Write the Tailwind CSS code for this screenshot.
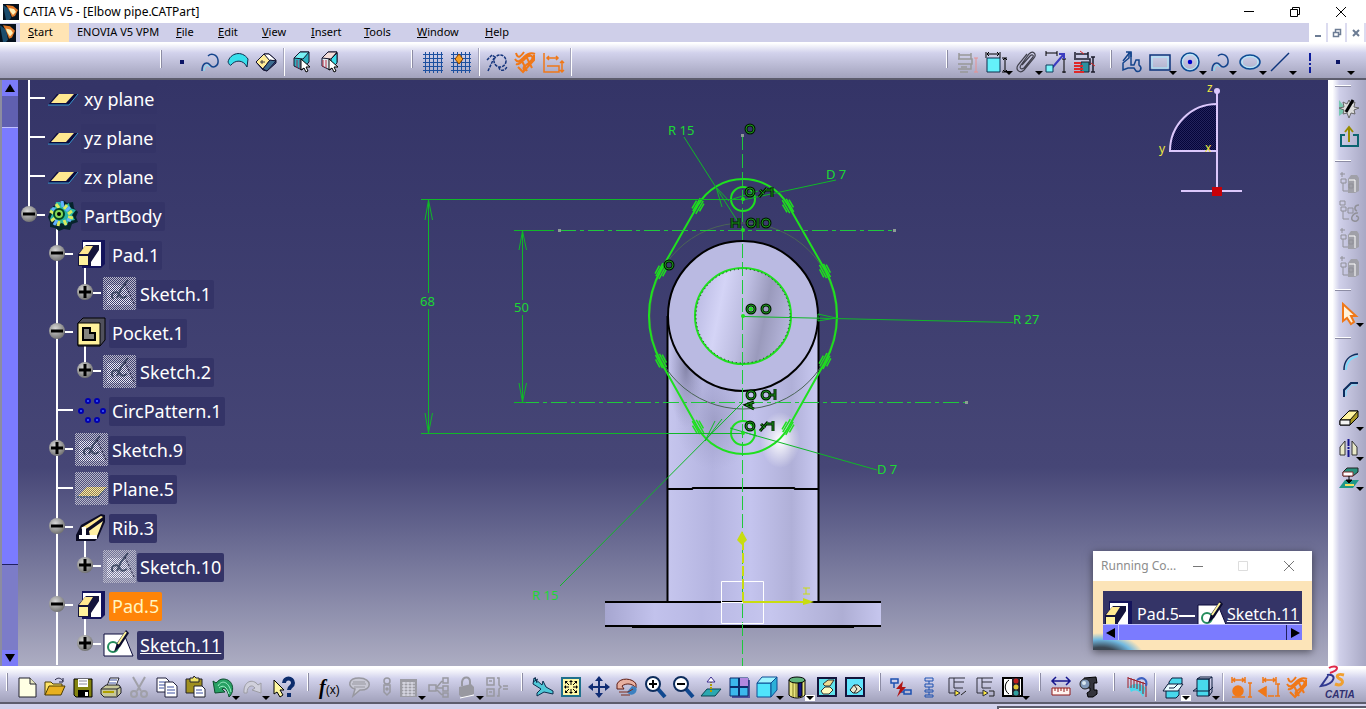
<!DOCTYPE html>
<html lang="en">
<head>
<meta charset="utf-8">
<title>CATIA V5 - [Elbow pipe.CATPart]</title>
<script src="https://cdn.jsdelivr.net/npm/@tailwindcss/browser@4"></script>
</head>
<body class="flex h-screen flex-col overflow-hidden bg-[#d2d2ec] font-['Noto_Sans','Open_Sans',sans-serif] text-black">

<svg class="absolute size-0" aria-hidden="true">
<defs>
  <pattern id="dither" width="2" height="2" patternUnits="userSpaceOnUse"><path d="M0 0h1v1H0zM1 1h1v1H1z" fill="#b9b9c9"/></pattern>
  <pattern id="ditherW" width="2" height="2" patternUnits="userSpaceOnUse"><path d="M0 0h1v1H0zM1 1h1v1H1z" fill="#ececf4"/></pattern>
  <pattern id="ditherY" width="2" height="2" patternUnits="userSpaceOnUse"><path d="M0 0h1v1H0zM1 1h1v1H1z" fill="#fff0a0"/></pattern>
  <pattern id="ditherD" width="2" height="2" patternUnits="userSpaceOnUse"><rect width="2" height="2" fill="#23235c"/><path d="M0 0h1v1H0zM1 1h1v1H1z" fill="#05053a"/></pattern>
  <radialGradient id="ball" cx=".4" cy=".35" r=".7"><stop offset="0" stop-color="#d8d8d8"/><stop offset="1" stop-color="#6c6c6c"/></radialGradient>
  <linearGradient id="pipe"><stop offset="0" stop-color="#c6c6ee"/><stop offset=".3" stop-color="#b4b4e0"/><stop offset=".55" stop-color="#c4c4ee"/><stop offset=".82" stop-color="#b0b0d8"/><stop offset="1" stop-color="#cacaf2"/></linearGradient>
  <linearGradient id="flange"><stop offset="0" stop-color="#a6a6d0"/><stop offset=".18" stop-color="#c2c2ec"/><stop offset=".35" stop-color="#b8b8e4"/><stop offset=".6" stop-color="#c6c6ee"/><stop offset=".86" stop-color="#aeaed4"/><stop offset="1" stop-color="#c6c6ee"/></linearGradient>
  <linearGradient id="bore" x1="0" y1=".4" x2="1" y2=".6"><stop offset="0" stop-color="#bcbce4"/><stop offset=".25" stop-color="#d4d4f6"/><stop offset=".5" stop-color="#bcbce0"/><stop offset=".72" stop-color="#9a9abc"/><stop offset="1" stop-color="#b8b8de"/></linearGradient>
  <radialGradient id="shade"><stop offset="0" stop-color="#77779a"/><stop offset="1" stop-color="#8a8ab0" stop-opacity="0"/></radialGradient>
  <radialGradient id="glow"><stop offset="0" stop-color="#ffffff"/><stop offset="1" stop-color="#ffffff" stop-opacity="0"/></radialGradient>

  <path id="arr" d="M21 21h8l-4 4z" fill="#000"/>

  <!-- application icon -->
  <g id="app"><path d="M0 0h16v16H0z" fill="#06101c"/><path d="M0 1l6 4 2 9-2 2H3z" fill="#1c4c6c"/><path d="M3 1l7 1 5 4-3 6-3 1-3-7z" fill="#e07828"/><path d="M6 4l5 1 2 3-3 3-3-4z" fill="#fff0b8"/></g>

  <!-- tree guides -->
  <g id="gv"><path d="M11 0v39" stroke="#fff" stroke-width="2"/></g>
  <g id="gt"><path d="M11 0v39M11 18h16" stroke="#fff" stroke-width="2"/></g>
  <g id="gm"><path d="M19 18h8" stroke="#fff" stroke-width="2"/><circle cx="11" cy="17" r="8" fill="url(#ball)"/><path d="M5 17h12" stroke="#000" stroke-width="3"/></g>
  <g id="gp"><path d="M19 18h8" stroke="#fff" stroke-width="2"/><circle cx="11" cy="17" r="8" fill="url(#ball)"/><path d="M5 17h12M11 11v12" stroke="#000" stroke-width="3"/></g>

  <!-- tree icons, 32 x 39 -->
  <g id="t-plane"><path d="M2 25l9-11h21l-9 11z" fill="#0b0b3c"/><path d="M2 25h21l9-11" fill="none" stroke="#3a9ad0"/><path d="M5 23l8-9h15l-8 9z" fill="#ffe890"/></g>
  <g id="t-body"><path d="M17 3l4 3 6-1 1 6 4 4-2 5 2 5-6 2-2 6-6-1-5 2-4-3-5-1v-5l-2-5 2-5 3-6 6-1z" fill="#06242c"/><path d="M14 5l4 4 5-3 1 5 6 2-4 5 3 5-6 1-3 5-4-3-5 2-2-5-5-1 2-5-2-5 5-2 1-5z" fill="#28b4a8"/><path d="M10 7l3 4M21 8l-3 4M4 14l5 3M26 14l-4 3M5 24l4-3M12 29l1-5M20 28l-2-5M27 21l-5-1" stroke="#d8ec60" stroke-width="3"/><path d="M6 11l4 3M24 10l-4 4M8 28l3-5M25 24l-4-2M16 4l1 6" stroke="#60b0ff" stroke-width="3"/><circle cx="13" cy="17" r="5" fill="#86d858" stroke="#042" stroke-width="2"/><circle cx="13" cy="17" r="2"/></g>
  <g id="t-pad"><path d="M8 4h23v24l-4 4H8z" fill="#14145c"/><path d="M9 6h18v24H9z" fill="#fff"/><path d="M4 18l8-9h13v5l-8 12v4H4z" fill="#14143c"/><path d="M5 18l6-8h8l-5 8z" fill="#ffe890"/><path d="M5 20h9v9H5z" fill="#fff29c"/></g>
  <g id="t-pocket"><path d="M4 9l5-5h22v22l-5 6H4z" fill="#50505c" stroke="#000"/><path d="M4 9h22v22H4z" fill="#fff29c" stroke="#000"/><path d="M9 14h7v5h5v7H9z" fill="#85857e" stroke="#000" stroke-width="2"/></g>
  <g id="t-sketch"><path d="M2 8h20l9 22H2z" fill="#fff" stroke="#0b0b3c"/><circle cx="11" cy="21" r="5" fill="none" stroke="#248c5c" stroke-width="2"/><path d="M12 26l3-9L24 4l3 3-9 14z" fill="#0b0b2c"/><path d="M16 18l8-12" stroke="#fff49c" stroke-width="2"/></g>
  <g id="t-hid"><path d="M1 2h33v33H1z" fill="url(#dither)"/><path d="M5 10h17l9 20H5z" fill="url(#ditherW)"/><path d="M11 24c-4-6 4-9 6-5s3 5 8 2M15 23l4-9 7-9" fill="none" stroke="#23304c" stroke-width="2" opacity=".75"/><path d="M23 9l9 20" stroke="#20203c" stroke-dasharray="2 2"/></g>
  <g id="t-hplane"><path d="M1 2h33v33H1z" fill="url(#dither)"/><path d="M4 26l9-9h20l-9 9z" fill="#8c7c5c"/><path d="M4 26l9-9h20l-9 9z" fill="url(#ditherY)"/><path d="M3 27h21l8-9" fill="none" stroke="#1c4460" stroke-dasharray="2 1"/></g>
  <g id="t-circ" fill="#4468ff" stroke="#0000b0" stroke-width="2"><circle cx="14" cy="9" r="2"/><circle cx="23" cy="9" r="2"/><circle cx="7" cy="19" r="2"/><circle cx="29" cy="19" r="2"/><circle cx="14" cy="28" r="2"/><circle cx="23" cy="28" r="2"/></g>
  <g id="t-rib"><path d="M2 32v-6l5-10L27 5l4 1v7l-7 16-3 3z" fill="#0b0b24"/><path d="M7 19L27 7l2 1-14 10-5 3z" fill="#ffe890"/><path d="M15 22l14-10-6 15h-7z" fill="#fff0a4"/><path d="M5 26h18v4H5zM8 18h4v12H8z" fill="#fff"/></g>

  <!-- sketcher icons -->
  <g id="i-dot"><path d="M10 10h4v4h-4z" fill="#0b1464"/></g>
  <g id="i-spline" fill="none" stroke="#14448c" stroke-width="1.500"><path d="M4 21c0-8 5-10 8-6s9 1 8-5-7-7-10-4"/><path d="M6 21c1-7 4-7 6-4" stroke="#7ce8ff" stroke-width="1"/></g>
  <g id="i-surf"><path d="M2 12C4 3 16 0 22 9l-1 8C17 9 9 10 5 15c-1 1-2-1-3-3z" fill="#38e0ec" stroke="#0c2c4c"/></g>
  <g id="i-solid" stroke="#141430"><path d="M2 12l8-8h5l7 6v3l-9 8-4-1z" fill="#3c50a0"/><path d="M2 12l8-8 6 6-7 9z" fill="#ffee98"/><path d="M10 4h5l7 6-6 1z" fill="#fff"/><path d="M9 19l7-9 6 1-9 10z" fill="#3c6c90"/><path d="M6 12h5M8 10v4" stroke-width=".8"/></g>
  <g id="i-cubeA" stroke="#14142c"><path d="M4 8l6-6h9v10l-7 8-8-4z" fill="#2cb0c0"/><path d="M4 8l6-6h9l-6 7z" fill="#78f0f4"/><path d="M7 10v8M10 10v9" stroke="#a02c50"/></g>
  <g id="i-cubeB" stroke="#14142c"><path d="M4 8l6-6h9v10l-7 8-8-4z" fill="#dce8ee"/><path d="M4 8l6-6h9l-6 7z" fill="#f4dcd8"/><path d="M13 9l6-6v10l-6 6z" fill="#3ce0ec"/><path d="M5 10v7M8 10v8" stroke="#c03048"/></g>
  <g id="i-cur"><path d="M11 9v11l3-2 2 4 2-1-2-4h4z" fill="#fff" stroke="#000"/></g>
  <g id="i-grid" stroke="#1c50a0" stroke-width="1" shape-rendering="crispEdges"><path d="M2 4h20M2 8h20M2 12h20M2 16h20M2 20h20M4 2v21M8 2v21M12 2v21M16 2v21M20 2v21"/></g>
  <g id="i-cons" fill="none" stroke="#14347c" stroke-width="1.500"><g stroke-dasharray="3 1"><circle cx="15" cy="11" r="6"/><path d="M2 10l5-5 3 2M3 21l6-13M14 17c0 5 7 4 8-1"/></g></g>
  <g id="i-geo" fill="none" stroke="#f07818" stroke-width="2"><path d="M3 3c2 7 5 3 8-1M2 9c3 5 6 1 9-2s7-5 11-3M3 14c4 2 9-7 13-8s5 2 1 6-8 4-6 8M14 8l5 10M8 9l6 12M5 17l5 5 11-12v-5"/></g>
  <g id="i-dim" fill="none" stroke="#f07818" stroke-width="1.500"><path d="M3 3v19h15v-6H6M6 8h11M8 6L6 8l2 2M15 6l2 2-2 2M21 11v11M19 13l2-2 2 2M19 20l2 2 2-2"/></g>
  <g id="i-c1" fill="none" stroke="#989898"><path d="M3 5h12M3 3v6M15 3v6M2 9h14v5H5M2 14h13v5H2M5 17h6M4 22h8" stroke-width="1.500"/><path d="M20 8v14M18 8h4M18 22h4" stroke="#e89090"/></g>
  <g id="i-c2"><path d="M3 8h13v14H3z" fill="#64f0fa" stroke="#0c2c4c"/><path d="M2 8V2M16 8V2M3 4h12M21 8v14M18 8h5M18 22h5M5 2L3 4l2 2M13 2l2 2-2 2M19 10l2-2 2 2M19 20l2 2 2-2" fill="none" stroke="#000"/></g>
  <g id="i-clip" fill="none" stroke="#40404c" stroke-width="1.200"><path d="M8 15l8-9c2-2 4-1 3 1l-9 11c-3 2-5 0-3-3L15 4c4-4 8 0 5 4L10 20c-4 4-9 0-6-5l9-11"/></g>
  <g id="i-c3" fill="none" stroke="#000"><path d="M2 3h11M2 1v5M13 1v5M20 9v14M18 9h4M18 22h4"/><path d="M8 18L20 4M15 4h5v5" stroke="#3c3cc0" stroke-width="2"/><path d="M2 15h7v7H2z" fill="#7cf4fa" stroke="#0c3c5c"/></g>
  <g id="i-c4" fill="none" stroke="#1c1c2c"><path d="M4 4h12M3 2v6M16 2v6M2 9h16v6M21 7v15M19 7h4M19 22h4" stroke-width="1.500"/><path d="M9 12h8v10H9z" fill="#2c90a0"/><path d="M2 13h7M2 16h9M2 19h9M2 22h10" stroke="#e02828" stroke-width="2"/><path d="M8 1l4 3M19 13l4 3" stroke="#e02828"/></g>
  <g id="i-prof" fill="none" stroke="#14448c" stroke-width="1.500"><path d="M3 20v-7l6-5V3h2v12h3l2-5h3v5c4 3 1 8-3 6l-2-3H8z"/><path d="M3 11l7-9M6 2h5v5"/></g>
  <g id="i-rect" fill="none" stroke="#0c347c" stroke-width="1.500"><path d="M2 5h20v15H2z"/><path d="M4 7h16v11H4z" stroke="#a8ecff" stroke-width="1"/></g>
  <g id="i-circ" fill="none" stroke="#0c4c94" stroke-width="1.500"><circle cx="12" cy="12" r="9"/><circle cx="12" cy="12" r="7.500" stroke="#b0f0ff" stroke-width="1"/><circle cx="12" cy="12" r="1.500" fill="#0000d0" stroke="#0000d0"/></g>
  <g id="i-ell" fill="none" stroke="#0c4c94" stroke-width="1.500"><ellipse cx="12" cy="12" rx="10" ry="7"/><ellipse cx="12" cy="12" rx="8" ry="5.500" stroke="#b0f0ff" stroke-width="1"/></g>
  <g id="i-line"><path d="M3 21L21 3" stroke="#0c347c" stroke-width="1.500"/></g>
  <g id="i-axis"><path d="M12 3v8M12 13v2M12 17v6" stroke="#0c1c9c" stroke-width="2"/></g>

  <!-- standard icons -->
  <g id="i-new"><path d="M4 3h11l6 6v13H4z" fill="#ffffe4" stroke="#20202c"/><path d="M15 3v6h6" fill="#e8e8c0" stroke="#20202c"/></g>
  <g id="i-open" stroke="#4c3c00"><path d="M2 20V7h6l2 2h9v3" fill="#ffe468"/><path d="M2 20l4-9h16l-4 9z" fill="#e8b020"/><path d="M12 5c3-3 6-2 8 1M20 3v4h-4" fill="none" stroke="#20203c"/></g>
  <g id="i-save"><path d="M3 4h18v18H5l-2-2z" fill="#848410" stroke="#000"/><path d="M7 4h10v8H7z" fill="#fff"/><path d="M8 6h8M8 9h8" stroke="#889"/><path d="M7 15h11v7H7z" fill="#000"/><path d="M14 17h3v4h-3z" fill="#fff"/></g>
  <g id="i-print" stroke="#20202c"><path d="M8 11l3-8h9l-3 8z" fill="#fff"/><path d="M11 5h7M10 8h7" stroke="#3c50a0"/><path d="M2 14l5-4h13l2 3v5l-4 4H5l-3-3z" fill="#c8c898"/><path d="M2 14h16v7M18 14l4-2" fill="none"/><path d="M4 17h11" stroke="#b0a000" stroke-width="2"/></g>
  <g id="i-cut" fill="none" stroke="#a0a0a8" stroke-width="2"><path d="M6 2l8 14M18 2l-8 14"/><circle cx="7" cy="19" r="3"/><circle cx="17" cy="19" r="3"/></g>
  <g id="i-copy" fill="#fff" stroke="#20203c"><path d="M2 3h9l3 3v11H2z"/><path d="M4 7h6M4 10h6M4 13h5" stroke="#3c50a0"/><path d="M10 7h8l4 4v11H10z"/><path d="M12 12h7M12 15h8M12 18h8" stroke="#3c50a0"/></g>
  <g id="i-paste" stroke="#20202c"><path d="M3 4h16v14H3z" fill="#a09020"/><path d="M7 3h3l1-2 2 2h3v4H7z" fill="#f0e468"/><path d="M11 11h8l3 3v8H11z" fill="#fff"/><path d="M13 15h6M13 18h7" stroke="#3c50a0"/></g>
  <g id="i-undo"><path d="M2 6l2 12 10-1-3-3c3-2 6 2 7 8 6-5 5-18-6-18-3 0-5 2-7 4z" fill="#28a064" stroke="#0c4c2c"/><path d="M7 11c4-7 11-4 13 6M8 13c4-4 8-1 10 6" fill="none" stroke="#a0f0c8"/></g>
  <g id="i-redo"><path d="M3 18C2 6 12 3 17 10l3-2v10l-9-3 3-2c-3-4-8-2-8 5z" fill="#d0d0dc" stroke="#9c9ca4"/></g>
  <g id="i-help"><path d="M3 5v14l3-2 3 5 3-2-3-5h4z" fill="#fff8a0" stroke="#000"/><path d="M13 8c0-6 9-6 9 0 0 4-4 3-4 7" fill="none" stroke="#0c2c6c" stroke-width="4"/><path d="M16 18h4v4h-4z" fill="#0c2c6c"/></g>
  <g id="i-bub"><path d="M12 3c14 0 13 13 1 12l-7 6 2-7C0 12 1 3 12 3z" fill="#c8c8d4" stroke="#9898a0" stroke-width="1.500"/><path d="M6 7h12M5 9h14M7 12h11" stroke="#9898a0"/></g>
  <g id="i-key" fill="none" stroke="#9898a0" stroke-width="1.500"><circle cx="12" cy="6" r="3"/><path d="M9 10h6v7l-3 3-3-3z"/><circle cx="12" cy="14" r="1"/></g>
  <g id="i-tab"><path d="M3 4h17v18H3z" fill="#9c9ca4"/><path d="M5 8h13M5 11h13M5 14h13M5 17h13M5 20h13M7 7v14M11 7v14M15 7v14" stroke="#e4e4f0"/></g>
  <g id="i-net" fill="none" stroke="#9898a0" stroke-width="1.500"><path d="M2 10h7v6H2zM16 3h5v5h-5zM16 11h5v5h-5zM16 18h5v4h-5zM9 13h7M10 12l5-6M10 15l5 5"/></g>
  <g id="i-lock"><path d="M4 12l12-3 3 3v7L8 23l-4-3z" fill="#9898a0"/><path d="M7 11V7c1-6 8-6 8 0v3" fill="none" stroke="#9898a0" stroke-width="2"/><path d="M5 23l14-3" stroke="#fff"/></g>
  <g id="i-eq" fill="none" stroke="#9898a0" stroke-width="1.500"><path d="M2 3h7v7H2zM2 14h7v7H2zM4 6h3M4 17h3M12 3h2v7l2 2-2 2v7h-2M18 11h5M18 14h5"/></g>

  <!-- view icons -->
  <g id="i-fly"><path d="M3 3l8 7 1-4 3 6 7 4v3l-9-2-7 4v-3l4-4-8-5z" fill="#50c8d8" stroke="#0c2c4c"/><path d="M4 2l2 6M2 7l5-3" stroke="#0c2c4c"/></g>
  <g id="i-fit"><path d="M3 3h18v18H3z" fill="#fff8a8" stroke="#20708c" stroke-width="2"/><path d="M12 5l2 2h-4zM12 19l2-2h-4zM5 12l2-2v4zM19 12l-2-2v4zM6 6h3L6 9zM18 6h-3l3 3zM6 18h3l-3-3zM18 18h-3l3-3z" fill="#000"/><path d="M12 6v4M12 14v4M6 12h4M14 12h4M7 7l3 3M17 7l-3 3M7 17l3-3M17 17l-3-3" stroke="#000"/></g>
  <g id="i-pan" fill="#102c74"><path d="M12 1l4 5h-3v5h5V8l5 4-5 4v-3h-5v5h3l-4 5-4-5h3v-5H6v3l-5-4 5-4v3h5V6H8z"/></g>
  <g id="i-rot"><path d="M2 9C5 2 18 3 21 9v4c-4-5-10-5-14-2l2 3H2z" fill="#e8b0a0" stroke="#5c1c14"/><path d="M12 17a5 5 0 1 0 9-5l-4-1z" fill="#3c80c0"/><path d="M4 17h9l5-3M6 20h9" fill="none" stroke="#7c2c1c"/></g>
  <g id="i-zin"><path d="M15 14l7 8" stroke="#104890" stroke-width="4"/><circle cx="10" cy="9" r="7" fill="#fff" stroke="#0c2c5c" stroke-width="2"/><path d="M6 9h8M10 5v8" stroke="#000" stroke-width="2"/></g>
  <g id="i-zout"><path d="M15 14l7 8" stroke="#104890" stroke-width="4"/><circle cx="10" cy="9" r="7" fill="#fff" stroke="#0c2c5c" stroke-width="2"/><path d="M6 9h8" stroke="#000" stroke-width="2"/></g>
  <g id="i-norm"><path d="M2 21l6-7h14l-6 7z" fill="#2ca8b0" stroke="#0c4450"/><path d="M12 17V7" stroke="#b0a000" stroke-width="2" stroke-dasharray="2 1"/><path d="M8 7h8l-4-5z" fill="#fff" stroke="#3c2c90"/></g>
  <g id="i-multi"><path d="M5 5h18v18H5z" fill="#50509c"/><path d="M3 3h18v18H3z" fill="#3cb8ec" stroke="#0c2c6c"/><path d="M12 3h9v9h-9z" fill="#b088e0"/><path d="M12 3v18M3 12h18" stroke="#0c2c6c" stroke-width="2"/></g>
  <g id="i-iso" stroke="#0c4c94"><path d="M2 8h14v14H2z" fill="#50e4fc"/><path d="M2 8l5-6h15l-6 6z" fill="#a0f4ff"/><path d="M16 8l6-6v13l-6 7z" fill="#2cb0d8"/></g>
  <g id="i-cyl" stroke="#000"><path d="M4 5v15c3 4 13 4 16 0V5z" fill="#e8e480"/><path d="M8 8v14M11 8v14" stroke="#807c20"/><path d="M13 7v15l4-1V7z" fill="#141480"/><ellipse cx="12" cy="5" rx="8" ry="3" fill="#60b47c"/></g>
  <g id="i-hs"><path d="M3 3h18v18H3z" fill="#60e4ec" stroke="#14143c" stroke-width="2"/><path d="M8 9l5-4h6l-4 6h-5z" fill="#f0dc90" stroke="#333"/><path d="M6 16l4-4h5l3 3-4 4H8z" fill="#fffcc0" stroke="#333"/></g>
  <g id="i-sw"><path d="M3 3h18v18H3z" fill="#60e4fc" stroke="#14143c" stroke-width="2"/><path d="M7 15l4-5h4l4 4-5 4h-4z" fill="#e8e8d0" stroke="#222"/><path d="M11 10l3 4-3 4" fill="none" stroke="#222"/></g>

  <!-- analysis icons -->
  <g id="i-upd" fill="none" stroke="#1c50b0" stroke-width="1.500"><path d="M2 4h7v4H2zM15 15h7v4h-7zM5 8v5M12 17h3"/><path d="M14 6l-7 8h4l-3 8 9-10h-4z" fill="#b01414" stroke="none"/></g>
  <g id="i-stk" fill="none" stroke="#1c50b0"><path d="M8 3h8v3H8zM8 9h8v3H8zM8 15h8v2H8zM8 20h8v2H8zM12 6v3M12 12v3M12 17v3"/></g>
  <g id="i-ins" fill="none" stroke="#30303c"><path d="M9 3H4v15h6M9 3h11M9 7h10M9 3v10h9"/><path d="M10 15l5 3-5 3z" fill="#ffec40"/></g>
  <g id="i-light"><path d="M2 3h19v18H2z" fill="#fff" stroke="#000" stroke-width="2"/><path d="M8 5c-5 3-5 11 0 14" stroke="#000" fill="none"/><path d="M11 3h8v18h-8z" fill="#20202c"/><circle cx="15" cy="6" r="2.500" fill="#c02020"/><circle cx="15" cy="12" r="2.500" fill="#e0c838"/><circle cx="15" cy="18" r="2.500" fill="#30a0a0"/></g>
  <g id="i-meas"><path d="M3 6h18M7 2L3 6l4 4M17 2l4 4-4 4" fill="none" stroke="#14148c" stroke-width="1.500"/><path d="M3 13h18v7H3z" fill="#fff4f0" stroke="#901818"/><path d="M6 13v3M9 13v4M12 13v3M15 13v4M18 13v3" stroke="#901818"/></g>
  <g id="i-cal"><path d="M7 3l12-1 1 6h-3v7h3v4l-4 3h-5l-1-4 3-2v-3H7z" fill="#34343c" stroke="#000"/><circle cx="8" cy="9" r="5" fill="#8098b8" stroke="#222"/><circle cx="7" cy="8" r="2" fill="#d8e8f0"/></g>
  <g id="i-draft"><path d="M4 12c5-5 12-4 17 1l-3 9c-3-6-7-8-12-5z" fill="#48d8ec"/><path d="M3 2v11M6 3v10M9 4v9M12 5v9M15 6v10M18 7v12M21 8v14M3 3l18 6" fill="none" stroke="#9c1c24"/><path d="M12 5c5-4 11-1 9 6" fill="none" stroke="#3c60c0" stroke-width="2"/></g>
  <g id="i-cutp" stroke="#0c1c3c"><path d="M8 7l3-4h10v5l-3 4H8zM5 15h13v5l-3 3H5z" fill="#48d8ec"/><path d="M2 16l5-7h15l-5 7z" fill="#e8fcff"/><path d="M8 13h5l4-4" fill="none"/></g>
  <g id="i-cutb" stroke="#0c1c3c"><path d="M6 4h12v17H6z" fill="#48d8ec"/><path d="M6 4l3-2h12v15l-3 4V4zM18 4l3-2M2 16l4-3M22 12l-4 4H2" fill="none"/></g>
  <g id="i-o1" stroke="#f07818" fill="none" stroke-width="1.500"><circle cx="9" cy="16" r="5" fill="#f07818"/><path d="M4 5h11M3 2v6M16 2v6M6 3L4 5l2 2M13 3l2 2-2 2M21 8v14M19 8h4M19 22h4M3 22h13"/></g>
  <g id="i-o2" stroke="#f07818" fill="none" stroke-width="1.500"><path d="M7 5h11M6 2v6M19 2v6M21 9v12M18 9h5M18 21h5M11 21h6M9 3L7 5l2 2M16 3l2 2-2 2"/><path d="M2 16l7-4v9z" fill="#f07818"/></g>

  <!-- right-hand bar -->
  <g id="i-ske"><path d="M2 4v16l8-6z" fill="#78c8b0"/><path d="M12 4l2 4 4-2-1 5 5 1-5 2 1 4-4-1-2 5-2-5-4 1 1-4-5-2 5-1-1-5 4 2z" fill="#ddd" stroke="#666"/><path d="M9 16l7-12" stroke="#000" stroke-width="3"/></g>
  <g id="i-exit"><path d="M8 11H4v11h17V11h-5" fill="none" stroke="#0c6470" stroke-width="2"/><path d="M12 18V4M8 8l4-5 4 5" fill="none" stroke="#988c00" stroke-width="2"/></g>
  <g id="i-ga"><path d="M11 8l3-4h6l2 3v13l-4 2h-7z" fill="#a0a0a8"/><path d="M12 9h6v12" stroke="#fff" fill="none"/><path d="M3 3h5M5 1v5M4 8h5v4H4zM6 12v8h5M12 13h4v4h-4z" fill="none" stroke="#909098"/></g>
  <g id="i-gb" fill="none" stroke="#909098"><path d="M3 2h5v4H3zM4 8h5v4H4zM6 12v8h6M11 9h5v5h-5z"/><path d="M22 6c-5 0-5 5-2 6M21 14c-5-1-9 7-4 8s6-5 2-5" stroke-width="1.500"/></g>
  <g id="i-sel"><path d="M6 2v17l4-3 4 6 3-2-3-6h5z" fill="#fff4dc" stroke="#f07818" stroke-width="2"/></g>
  <g id="i-fil" fill="none"><path d="M7 21C7 12 12 6 21 5" stroke="#0c2c5c" stroke-width="1.500"/><path d="M9 21C9 14 13 9 21 7" stroke="#78dcfc" stroke-width="1.500"/></g>
  <g id="i-cha" fill="none"><path d="M7 20v-7l7-7h7" stroke="#0c2c5c" stroke-width="2"/><path d="M9 19v-5l6-6h5" stroke="#78dcfc"/></g>
  <g id="i-era" stroke="#000"><path d="M3 15l9-10h9v6l-8 8H3z" fill="#a89828"/><path d="M3 14l9-9h9l-8 9z" fill="#fff4a0"/><path d="M3 14h10v5H3z" fill="#f4f4f4"/></g>
  <g id="i-mir"><path d="M3 11l5-6v14H3zM20 11l-5-6v14h5z" fill="#e8e8c8" stroke="#333"/><path d="M11.500 3v18" stroke="#14148c" stroke-width="2" stroke-dasharray="7 1 2 1"/></g>
  <g id="i-proj"><path d="M2 22l6-8h14l-6 8z" fill="#209888"/><path d="M6 6l4-4h11v4l-5 4H6z" fill="#28907c" stroke="#222"/><path d="M6 6h10v4H6z" fill="#fff" stroke="#803030"/><path d="M12 10v6M9 14h6l-3 3z" stroke="#000"/><path d="M8 19h9" stroke="#f4e060" stroke-width="2"/></g>

  <!-- constraint marks -->
  <g id="k-o" fill="none"><circle r="4" stroke="#001a00" stroke-width="3"/><circle r="4" stroke="#1a961a"/></g>
  <g id="k-t" fill="none"><path d="M-7 4l8-9M-6-3l4 4M0-3h6M6-6v10" stroke="#001a00" stroke-width="3"/><path d="M-7 4l8-9M-6-3l4 4M0-3h6M6-6v10" stroke="#1a961a"/></g>
  <g id="k-tan" fill="none" stroke="#1fe01f" stroke-width="1.500"><path d="M-2-8v15M2-7v15M-4-4v9M4-5v9"/></g>
</defs>
</svg>

<!-- title bar -->
<header class="flex h-[23px] shrink-0 items-center bg-white pl-[3px]">
  <svg class="size-4" aria-hidden="true"><use href="#app"/></svg>
  <h1 class="ml-1 flex-1 text-xs whitespace-nowrap">CATIA V5 - [Elbow pipe.CATPart]</h1>
  <button aria-label="Minimize" class="flex w-[46px] justify-center"><svg class="h-3 w-3" stroke="#000"><path d="M1 5.500h10"/></svg></button>
  <button aria-label="Restore" class="flex w-[46px] justify-center"><svg class="h-3 w-3" fill="none" stroke="#000"><path d="M1.500 3.500h7v7h-7zM3.500 3.500v-2h7v7h-2"/></svg></button>
  <button aria-label="Close" class="mr-[2px] flex w-[46px] justify-center"><svg class="h-3 w-3" stroke="#000"><path d="M1 1l10 10M11 1L1 11"/></svg></button>
</header>

<!-- menu bar -->
<nav class="flex h-[19px] shrink-0 items-stretch bg-[#cfcfe9] text-[11px] [&>button]:pl-2 [&>button]:text-left [&>button]:whitespace-nowrap">
  <svg class="mr-1 h-[18px] w-4 self-center" viewBox="0 0 16 16" preserveAspectRatio="none" aria-hidden="true"><use href="#app"/></svg>
  <button class="w-[49px] bg-[#ffe4b4]"><u>S</u>tart</button>
  <button class="w-[99px]">ENOVIA V5 VPM</button>
  <button class="w-[42px]"><u>F</u>ile</button>
  <button class="w-11"><u>E</u>dit</button>
  <button class="w-[49px]"><u>V</u>iew</button>
  <button class="w-[53px]"><u>I</u>nsert</button>
  <button class="w-[53px]"><u>T</u>ools</button>
  <button class="w-[68px]"><u>W</u>indow</button>
  <button class="w-[42px]"><u>H</u>elp</button>
  <div class="ml-auto flex gap-[2px] bg-[#dcdcf0] pr-[2px] [&>button]:flex [&>button]:w-[17px] [&>button]:items-center [&>button]:justify-center [&>button]:bg-white [&>button]:pl-0">
    <button aria-label="Minimize document"><svg class="size-3" stroke="#6c7c94" stroke-width="2"><path d="M3 9h6"/></svg></button>
    <button aria-label="Restore document"><svg class="size-3" fill="none" stroke="#6c7c94"><path d="M2.500 5.500h5v4h-5zM4.500 5v-2.500h5v5h-2" stroke-width="1.500"/></svg></button>
    <button aria-label="Close document"><svg class="size-3" stroke="#6c7c94" stroke-width="2"><path d="M3 3l6 6M9 3l-6 6"/></svg></button>
  </div>
</nav>

<!-- upper toolbar -->
<div role="toolbar" aria-label="Sketcher" class="flex h-[38px] shrink-0 items-start border-b-2 border-[#5c5c6c] bg-linear-to-b from-white from-3% via-[#d2d2ec] via-30% to-[#a2a2bc] pt-[6px] [&_button]:h-7 [&_button]:shrink-0 [&_button]:p-[2px] [&_svg]:size-6 [&_svg]:overflow-visible">
  <div class="ml-[160px] flex">
    <i class="mt-[2px] mr-[6px] h-[18px] w-[2px] border-r border-l border-r-[#8c8ca4] border-l-white"></i>
    <button aria-label="Point" class="w-7"><svg><use href="#i-dot"/></svg></button>
    <button aria-label="Curve" class="w-7"><svg><use href="#i-spline"/></svg></button>
    <button aria-label="Surface" class="w-7"><svg><use href="#i-surf"/></svg></button>
    <button aria-label="Volume" class="w-7"><svg><use href="#i-solid"/></svg></button>
    <i class="mx-[3px] h-[28px] w-[2px] border-r border-l border-r-white border-l-[#a4a4bc]"></i>
    <button aria-label="Filter A" class="w-7"><svg><use href="#i-cubeA"/><use href="#i-cur"/></svg></button>
    <button aria-label="Filter B" class="w-7"><svg><use href="#i-cubeB"/><use href="#i-cur"/></svg></button>
  </div>
  <div class="ml-[67px] flex">
    <i class="mt-[2px] mr-[6px] h-[18px] w-[2px] border-r border-l border-r-[#8c8ca4] border-l-white"></i>
    <button aria-label="Grid" class="w-7"><svg><use href="#i-grid"/></svg></button>
    <button aria-label="Snap to point" class="w-7"><svg><use href="#i-grid"/><path d="M10 4l4 5-4 5-4-5z" fill="#f8a020" stroke="#803c00"/></svg></button>
    <i class="mx-[3px] h-[28px] w-[2px] border-r border-l border-r-white border-l-[#a4a4bc]"></i>
    <button aria-label="Construction element" class="w-7"><svg><use href="#i-cons"/></svg></button>
    <button aria-label="Geometrical constraints" class="w-7"><svg><use href="#i-geo"/></svg></button>
    <button aria-label="Dimensional constraints" class="w-7"><svg><use href="#i-dim"/></svg></button>
    <i class="mx-[3px] h-[28px] w-[2px] border-r border-l border-r-white border-l-[#a4a4bc]"></i>
  </div>
  <div class="ml-auto flex">
    <i class="mt-[2px] mr-[6px] h-[18px] w-[2px] border-r border-l border-r-[#8c8ca4] border-l-white"></i>
    <button aria-label="Constraints in dialog" class="w-7"><svg><use href="#i-c1"/></svg></button>
    <button aria-label="Constraint" class="w-[30px]"><svg><use href="#i-c2"/><use href="#arr"/></svg></button>
    <button aria-label="Fix together" class="w-[30px]"><svg><use href="#i-clip"/><use href="#arr"/></svg></button>
    <button aria-label="Animate constraint" class="w-7"><svg><use href="#i-c3"/></svg></button>
    <button aria-label="Edit multi-constraint" class="w-7"><svg><use href="#i-c4"/></svg></button>
    <i class="mt-[2px] mr-[6px] ml-3 h-[18px] w-[2px] border-r border-l border-r-[#8c8ca4] border-l-white"></i>
    <button aria-label="Profile" class="w-7"><svg><use href="#i-prof"/></svg></button>
    <button aria-label="Rectangle" class="w-[30px]"><svg><use href="#i-rect"/><use href="#arr"/></svg></button>
    <button aria-label="Circle" class="w-[30px]"><svg><use href="#i-circ"/><use href="#arr"/></svg></button>
    <button aria-label="Spline" class="w-[30px]"><svg><use href="#i-spline"/><use href="#arr"/></svg></button>
    <button aria-label="Ellipse" class="w-[30px]"><svg><use href="#i-ell"/><use href="#arr"/></svg></button>
    <button aria-label="Line" class="w-[30px]"><svg><use href="#i-line"/><use href="#arr"/></svg></button>
    <button aria-label="Axis" class="w-7"><svg><use href="#i-axis"/></svg></button>
    <button aria-label="Point by clicking" class="mr-3 w-[30px]"><svg><use href="#i-dot"/><use href="#arr"/></svg></button>
  </div>
</div>

<main class="flex min-h-0 flex-1">
  <!-- tree scroll bar -->
  <div class="flex w-[18px] shrink-0 flex-col border-l-2 border-[#8c8ca0] bg-[#7676d8]">
    <button aria-label="Scroll up" class="flex h-4 items-center justify-center bg-[#7b7bf8]"><svg class="h-[10px] w-[10px]"><path d="M5 1l5 8H0z"/></svg></button>
    <div class="h-[31px] bg-[#6060b0]"></div>
    <div class="flex-1 border-t border-b border-t-[#c0c0ff] border-b-[#202060] bg-[#7b7bff]"></div>
    <div class="h-[85px] bg-[#7c7cc8]"></div>
    <button aria-label="Scroll down" class="flex h-4 items-center justify-center bg-[#7b7bf8]"><svg class="h-[10px] w-[10px]"><path d="M5 9l5-8H0z"/></svg></button>
  </div>

  <!-- 3D viewport -->
  <section aria-label="Part view" class="relative min-w-0 flex-1 overflow-hidden bg-linear-to-b from-[#343467] via-[#464676] via-66% to-[#adadc2]">
    <svg class="absolute inset-0 h-full w-full" viewBox="18 80 1310 586" font-family="'Noto Sans','Open Sans',sans-serif" font-size="13" fill="none">
      <!-- solid -->
      <path d="M667 316h152v286H667z" fill="url(#pipe)"/>
      <ellipse cx="686" cy="368" rx="18" ry="60" fill="url(#shade)" opacity=".8"/>
      <ellipse cx="715" cy="420" rx="40" ry="50" fill="url(#shade)" opacity=".35"/>
      <ellipse cx="780" cy="440" rx="20" ry="28" fill="url(#glow)"/>
      <path d="M605 602h276v24H605z" fill="url(#flange)"/>
      <g stroke="#000" stroke-width="2"><path d="M667.500 316v286M818.500 316v286M667 489h25l1-1h101l1 1h24M605 602h276M605 626h276M632 627h222"/></g>
      <circle cx="743" cy="316" r="75" fill="#babae2" stroke="#000" stroke-width="2"/>
      <circle cx="743" cy="316" r="48" fill="url(#bore)" stroke="#1fe01f" stroke-width="2"/>
      <circle cx="743" cy="316" r="47" stroke="#0c300c" stroke-dasharray="1 3"/>
      <circle cx="743" cy="316" r="93" stroke="#4a6456"/>
      <!-- profile -->
      <path d="M697.800 205.300A52 52 0 0 1 788.200 205.300L824.800 269.600A94 94 0 0 1 824.800 362.400L788.200 427.700A52 52 0 0 1 697.800 427.700L661.200 362.400A94 94 0 0 1 661.200 269.600Z" stroke="#1fe01f" stroke-width="2"/>
      <circle cx="743" cy="199" r="12" stroke="#1fe01f" stroke-width="2"/>
      <circle cx="743" cy="433" r="12" stroke="#1fe01f" stroke-width="2"/>
      <use href="#k-tan" transform="translate(698 206) rotate(30)"/><use href="#k-tan" transform="translate(788 206) rotate(-30)"/>
      <use href="#k-tan" transform="translate(661 271) rotate(28)"/><use href="#k-tan" transform="translate(825 271) rotate(-28)"/>
      <use href="#k-tan" transform="translate(661 361) rotate(-28)"/><use href="#k-tan" transform="translate(825 361) rotate(28)"/>
      <use href="#k-tan" transform="translate(698 427) rotate(-30)"/><use href="#k-tan" transform="translate(788 427) rotate(30)"/>
      <!-- axes -->
      <g stroke="#1fc83c"><path d="M742.500 136v530" stroke-dasharray="14 4"/><path d="M560 230.500h334" stroke-dasharray="16 4 4 4"/><path d="M523 402.500h443" stroke-dasharray="16 4 4 4"/></g>
      <g fill="#8c9c94"><path d="M558 229h3v3h-3zM893 229h3v3h-3zM965 401h3v3h-3zM741 134h3v3h-3z"/></g>
      <!-- dimensions -->
      <g stroke="#10b828">
        <path d="M421 199.500h322M421 433.500h322M428.500 200v93M428.500 309v124M425 220l3.500-20 4 20M425 413l3.500 20 4-20"/>
        <path d="M514 230.500h40M514 402.500h12M522.500 231v69M522.500 315v87M519 250l3.500-19 4 19M519 383l3.500 19 4-19"/>
        <path d="M684 137l54 85M716 187l6 20M716 187l13 14"/><path d="M836 180l-93 20M758 191l-28 9"/>
        <path d="M743 316.500l270 6M836 318l-18-4v7z"/><path d="M877 470l-134-38M730 428l27 8"/><path d="M560 586l183-184M705 441l17-22M705 441l10-20"/>
      </g>
      <g fill="#1fe01f"><circle cx="743" cy="199" r="2"/><circle cx="743" cy="230" r="2"/><circle cx="743" cy="316" r="2"/><circle cx="743" cy="433" r="2"/></g>
      <g fill="#1cd834"><text x="668" y="135">R 15</text><text x="826" y="179">D 7</text><text x="1013" y="324">R 27</text><text x="877" y="474">D 7</text><text x="532" y="600">R 15</text><text x="420" y="306">68</text><text x="514" y="312">50</text></g>
      <use href="#k-o" x="750" y="129"/><use href="#k-o" x="669" y="265"/><use href="#k-o" x="750" y="192"/><use href="#k-t" x="766" y="193"/>
      <use href="#k-o" x="751" y="223"/><use href="#k-o" x="766" y="223"/><path d="M732 218v10M739 218v10M732 223h7M758 218v10" stroke="#001a00" stroke-width="3"/><path d="M732 218v10M739 218v10M732 223h7M758 218v10" stroke="#1a961a"/>
      <use href="#k-o" x="751" y="309"/><use href="#k-o" x="766" y="309"/><circle cx="751" cy="309" r="2" fill="#1fe01f"/>
      <use href="#k-o" x="751" y="395"/><use href="#k-o" x="766" y="395"/><path d="M775 389v11M769 395h6M754 402l-8 3 8 4M751 403v5" stroke="#001a00" stroke-width="3"/><path d="M775 389v11M769 395h6M754 402l-8 3 8 4M751 403v5" stroke="#1a961a"/>
      <use href="#k-o" x="750" y="426"/><use href="#k-t" x="767" y="427"/>
      <!-- sketch origin -->
      <path d="M721.500 581.500h42v42h-42z" stroke="#fff"/><path d="M721 602.500h22" stroke="#fff"/>
      <g stroke="#c8dc10" stroke-width="2"><path d="M743 602v-60" stroke-dasharray="10 3"/><path d="M743 602h62"/><path d="M742 531l5 9-5 5-5-5zM803 598l11 4-11 3z" fill="#c8dc10" stroke="none"/><path d="M803 588h7M803 594h7M806 588v6" stroke-width="1"/></g>
    </svg>

    <!-- compass -->
    <svg class="absolute top-0 right-[80px] h-[130px] w-[100px]" font-family="'Noto Sans',sans-serif" font-size="12" fill="none" stroke="#dcc8fc" stroke-width="2">
      <path d="M69 71V24A47 47 0 0 0 22 71z" fill="url(#ditherD)"/><path d="M69 11v100M33 111h61"/>
      <circle cx="69" cy="11" r="3" fill="#dcc8fc" stroke="none"/><path d="M64 107h10v9H64z" fill="#c80008" stroke="none"/>
      <g fill="#f0e840" stroke="none"><text x="59" y="12">z</text><text x="11" y="73">y</text><text x="57" y="72">x</text></g>
    </svg>

    <!-- specification tree -->
    <ul class="absolute top-0 left-0 text-[18px] leading-[29px] text-white [&_svg]:h-[39px] [&_svg]:w-7 [&_svg]:shrink-0 [&_svg]:overflow-visible [&_svg:last-of-type]:w-8 [&>li]:flex [&>li]:h-[39px] [&>li]:items-center [&_a]:ml-[3px] [&_a]:rounded-xs [&_a]:bg-[#343467] [&_a]:px-[3px] [&_a]:whitespace-nowrap">
      <li><svg><use href="#gt"/></svg><svg><use href="#t-plane"/></svg><a href="#xy">xy plane</a></li>
      <li><svg><use href="#gt"/></svg><svg><use href="#t-plane"/></svg><a href="#yz">yz plane</a></li>
      <li><svg><use href="#gt"/></svg><svg><use href="#t-plane"/></svg><a href="#zx">zx plane</a></li>
      <li><svg><path d="M11 0v10" stroke="#fff" stroke-width="2"/><use href="#gm"/></svg><svg><path d="M11 31v8" stroke="#fff" stroke-width="2"/><use href="#t-body"/></svg><a href="#body">PartBody</a></li>
      <li><svg></svg><svg><use href="#gv"/><use href="#gm"/></svg><svg><path d="M11 30v9" stroke="#fff" stroke-width="2"/><use href="#t-pad"/></svg><a href="#pad1">Pad.1</a></li>
      <li><svg></svg><svg><use href="#gv"/></svg><svg><path d="M11 0v10" stroke="#fff" stroke-width="2"/><use href="#gp"/></svg><svg><use href="#t-hid"/></svg><a href="#s1">Sketch.1</a></li>
      <li><svg></svg><svg><use href="#gv"/><use href="#gm"/></svg><svg><path d="M11 30v9" stroke="#fff" stroke-width="2"/><use href="#t-pocket"/></svg><a href="#pocket1">Pocket.1</a></li>
      <li><svg></svg><svg><use href="#gv"/></svg><svg><path d="M11 0v10" stroke="#fff" stroke-width="2"/><use href="#gp"/></svg><svg><use href="#t-hid"/></svg><a href="#s2">Sketch.2</a></li>
      <li><svg></svg><svg><use href="#gt"/></svg><svg><use href="#t-circ"/></svg><a href="#circ">CircPattern.1</a></li>
      <li><svg></svg><svg><use href="#gv"/><use href="#gp"/></svg><svg><use href="#t-hid"/></svg><a href="#s9">Sketch.9</a></li>
      <li><svg></svg><svg><use href="#gt"/></svg><svg><use href="#t-hplane"/></svg><a href="#p5">Plane.5</a></li>
      <li><svg></svg><svg><use href="#gv"/><use href="#gm"/></svg><svg><path d="M11 30v9" stroke="#fff" stroke-width="2"/><use href="#t-rib"/></svg><a href="#rib3">Rib.3</a></li>
      <li><svg></svg><svg><use href="#gv"/></svg><svg><path d="M11 0v10" stroke="#fff" stroke-width="2"/><use href="#gp"/></svg><svg><use href="#t-hid"/></svg><a href="#s10">Sketch.10</a></li>
      <li><svg></svg><svg><use href="#gv"/><use href="#gm"/></svg><svg><path d="M11 30v9" stroke="#fff" stroke-width="2"/><use href="#t-pad"/></svg><a href="#pad5" class="bg-[#ff8408]! text-[#fff4c0]">Pad.5</a></li>
      <li><svg></svg><svg><use href="#gv"/></svg><svg><path d="M11 0v10" stroke="#fff" stroke-width="2"/><use href="#gp"/></svg><svg><use href="#t-sketch"/></svg><a href="#s11" class="underline">Sketch.11</a></li>
    </ul>

    <!-- floating dialog -->
    <div role="dialog" aria-labelledby="rc" class="absolute right-4 bottom-4 w-[219px] bg-white shadow-[0_2px_8px_rgba(0,0,0,0.5)]">
      <div class="flex h-[30px] items-center pl-2 text-[#8c8c8c]">
        <h2 id="rc" class="w-[74px] text-xs whitespace-nowrap">Running Co...</h2>
        <button aria-label="Minimize dialog" class="flex w-[46px] justify-center"><svg class="size-3" stroke="#777"><path d="M1 6.500h10"/></svg></button>
        <button aria-label="Maximize dialog" class="flex w-11 justify-center" disabled><svg class="size-3" fill="none" stroke="#ddd"><path d="M1.500 1.500h9v9h-9z"/></svg></button>
        <button aria-label="Close dialog" class="flex flex-1 justify-center"><svg class="size-3" stroke="#777"><path d="M1 1l10 10M11 1L1 11"/></svg></button>
      </div>
      <div class="bg-[#fce4b8] bg-[radial-gradient(ellipse_44px_26px_at_8px_78px,#303438_0,#3c4854_45%,#70b8e0_75%,#fce4b8_100%)] p-[10px]">
        <div class="flex h-[33px] items-end overflow-hidden bg-[#343467] text-[16px] leading-5 text-white [&>svg]:h-[33px] [&>svg]:w-8 [&>svg]:shrink-0">
          <svg viewBox="2 -6 32 33" preserveAspectRatio="xMinYMin"><use href="#t-pad"/></svg>
          <span class="pl-[2px]">Pad.5</span>
          <svg class="w-4!"><path d="M0 25h16" stroke="#fff" stroke-width="2"/></svg>
          <svg viewBox="-1 -6 32 33" preserveAspectRatio="xMinYMin"><use href="#t-sketch"/></svg>
          <span class="underline">Sketch.11</span>
        </div>
        <div class="flex h-4 border-t border-[#c0c0ff] bg-[#7b7bff]">
          <button aria-label="Scroll left" class="flex w-4 items-center justify-center border-r border-[#c0c0ff]"><svg class="h-[10px] w-[10px]"><path d="M9 0v10L0 5z"/></svg></button>
          <div class="flex-1"></div>
          <button aria-label="Scroll right" class="flex w-4 items-center justify-center border-l border-[#202060]"><svg class="h-[10px] w-[10px]"><path d="M1 0v10l9-5z"/></svg></button>
        </div>
      </div>
    </div>
  </section>

  <!-- right toolbar -->
  <div role="toolbar" aria-label="Workbench" aria-orientation="vertical" class="flex w-[38px] shrink-0 flex-col bg-linear-to-r from-white from-12% via-[#d0d0ea] via-30% to-[#a8a8c4] pl-[7px] [&_i]:h-[2px] [&_i]:w-4 [&_i]:shrink-0 [&_i]:border-t [&_i]:border-b [&_i]:border-t-white [&_i]:border-b-[#8c8ca4] [&_svg]:size-6 [&_svg]:overflow-visible [&>button]:w-7 [&>button]:shrink-0 [&>button]:p-[2px]">
    <i class="mt-[5px] mb-[7px]"></i>
    <button aria-label="Sketcher workbench" class="h-7"><svg><use href="#i-ske"/></svg></button>
    <button aria-label="Exit workbench" class="h-7"><svg><use href="#i-exit"/></svg></button>
    <i class="mt-[10px] mb-[7px]"></i>
    <button aria-label="Publish A" class="h-7" disabled><svg><use href="#i-ga"/></svg></button>
    <button aria-label="Publish B" class="h-7" disabled><svg><use href="#i-gb"/></svg></button>
    <button aria-label="Publish C" class="h-7" disabled><svg><use href="#i-ga"/></svg></button>
    <button aria-label="Publish D" class="h-7" disabled><svg><use href="#i-ga"/></svg></button>
    <i class="mt-[8px] mb-[8px]"></i>
    <button aria-label="Select" class="h-[30px]"><svg><use href="#i-sel"/><path d="M19 21h8l-4 4z"/></svg></button>
    <i class="mt-[8px] mb-[8px]"></i>
    <button aria-label="Corner" class="h-7"><svg><use href="#i-fil"/></svg></button>
    <button aria-label="Chamfer" class="h-7"><svg><use href="#i-cha"/></svg></button>
    <button aria-label="Trim" class="h-[30px]"><svg><use href="#i-era"/><path d="M19 21h8l-4 4z"/></svg></button>
    <button aria-label="Mirror" class="h-[30px]"><svg><use href="#i-mir"/><path d="M19 21h8l-4 4z"/></svg></button>
    <button aria-label="Project 3D elements" class="h-[30px]"><svg><use href="#i-proj"/><path d="M19 21h8l-4 4z"/></svg></button>
  </div>
</main>

<!-- lower toolbar -->
<div role="toolbar" aria-label="Standard" class="relative flex h-[38px] shrink-0 items-start border-b-2 border-[#5c5c6c] bg-linear-to-b from-white from-6% via-[#d2d2ec] via-35% to-[#a2a2bc] pt-[7px] [&>button]:h-7 [&>button]:shrink-0 [&>button]:p-[2px] [&>button>svg]:size-6 [&>button>svg]:overflow-visible">
  <i class="mr-[5px] ml-[6px] h-[18px] w-[2px] shrink-0 border-r border-l border-r-[#8c8ca4] border-l-white"></i>
  <button aria-label="New" class="w-7"><svg><use href="#i-new"/></svg></button>
  <button aria-label="Open" class="w-7"><svg><use href="#i-open"/></svg></button>
  <button aria-label="Save" class="w-7"><svg><use href="#i-save"/></svg></button>
  <button aria-label="Print" class="w-7"><svg><use href="#i-print"/></svg></button>
  <button aria-label="Cut" class="w-7" disabled><svg><use href="#i-cut"/></svg></button>
  <button aria-label="Copy" class="w-7"><svg><use href="#i-copy"/></svg></button>
  <button aria-label="Paste" class="w-7"><svg><use href="#i-paste"/></svg></button>
  <button aria-label="Undo" class="w-[30px]"><svg><use href="#i-undo"/><use href="#arr"/></svg></button>
  <button aria-label="Redo" class="w-[30px]"><svg><use href="#i-redo"/><use href="#arr"/></svg></button>
  <button aria-label="What's this" class="w-7"><svg><use href="#i-help"/></svg></button>
  <i class="mr-[8px] ml-[10px] h-[18px] w-[2px] shrink-0 border-r border-l border-r-[#8c8ca4] border-l-white"></i>
  <button aria-label="Formula" class="w-7 text-left leading-6 whitespace-nowrap"><span class="font-['Liberation_Serif',serif] text-[20px] font-bold italic">f</span><span class="font-['Liberation_Sans',sans-serif] text-xs">(x)</span></button>
  <button aria-label="Comment" class="w-7" disabled><svg><use href="#i-bub"/></svg></button>
  <button aria-label="Key" class="w-[22px]" disabled><svg><use href="#i-key"/></svg></button>
  <button aria-label="Design table" class="w-[30px]"><svg><use href="#i-tab"/><use href="#arr"/></svg></button>
  <button aria-label="Relations" class="w-7" disabled><svg><use href="#i-net"/></svg></button>
  <button aria-label="Lock" class="w-[30px]"><svg><use href="#i-lock"/><use href="#arr"/></svg></button>
  <button aria-label="Equivalent dimensions" class="w-7" disabled><svg><use href="#i-eq"/></svg></button>
  <i class="mr-[6px] ml-[10px] h-[18px] w-[2px] shrink-0 border-r border-l border-r-[#8c8ca4] border-l-white"></i>
  <button aria-label="Fly mode" class="w-7"><svg><use href="#i-fly"/></svg></button>
  <button aria-label="Fit all in" class="w-7"><svg><use href="#i-fit"/></svg></button>
  <button aria-label="Pan" class="w-7"><svg><use href="#i-pan"/></svg></button>
  <button aria-label="Rotate" class="w-7"><svg><use href="#i-rot"/></svg></button>
  <button aria-label="Zoom in" class="w-7"><svg><use href="#i-zin"/></svg></button>
  <button aria-label="Zoom out" class="w-7"><svg><use href="#i-zout"/></svg></button>
  <button aria-label="Normal view" class="w-7"><svg><use href="#i-norm"/></svg></button>
  <button aria-label="Multi-view" class="w-7"><svg><use href="#i-multi"/></svg></button>
  <button aria-label="Isometric view" class="w-[30px]"><svg><use href="#i-iso"/><use href="#arr"/></svg></button>
  <button aria-label="Shading with edges" class="w-[30px]"><svg><use href="#i-cyl"/><path d="M20 20h10v6H20z" fill="#fff"/><use href="#arr"/></svg></button>
  <button aria-label="Hide or show" class="w-7"><svg><use href="#i-hs"/></svg></button>
  <button aria-label="Swap visible space" class="w-7"><svg><use href="#i-sw"/></svg></button>
  <i class="mr-[6px] ml-[10px] h-[18px] w-[2px] shrink-0 border-r border-l border-r-[#8c8ca4] border-l-white"></i>
  <button aria-label="Update" class="w-7"><svg><use href="#i-upd"/></svg></button>
  <button aria-label="Structure" class="w-7"><svg><use href="#i-stk"/></svg></button>
  <button aria-label="Insert body" class="w-7"><svg><use href="#i-ins"/><path d="M16 20l5-4" stroke="#222"/></svg></button>
  <button aria-label="Insert geometrical set" class="w-7"><svg><use href="#i-ins"/><path d="M16 16h5v5h-5" fill="none" stroke="#222"/></svg></button>
  <button aria-label="Solving status" class="w-[30px]"><svg><use href="#i-light"/><use href="#arr"/></svg></button>
  <i class="mr-[6px] ml-[10px] h-[18px] w-[2px] shrink-0 border-r border-l border-r-[#8c8ca4] border-l-white"></i>
  <button aria-label="Measure between" class="w-7"><svg><use href="#i-meas"/></svg></button>
  <button aria-label="Measure item" class="w-7"><svg><use href="#i-cal"/></svg></button>
  <i class="mr-[8px] ml-[10px] h-[18px] w-[2px] shrink-0 border-r border-l border-r-[#8c8ca4] border-l-white"></i>
  <button aria-label="Draft analysis" class="w-7"><svg><use href="#i-draft"/></svg></button>
  <i class="mx-[3px] h-[28px] w-[2px] shrink-0 border-r border-l border-r-white border-l-[#a4a4bc]"></i>
  <button aria-label="Cut part by sketch plane" class="w-[30px]"><svg><use href="#i-cutp"/><path d="M20 20h10v6H20z" fill="#fff"/><use href="#arr"/></svg></button>
  <button aria-label="Visualization" class="w-[30px]"><svg><use href="#i-cutb"/><use href="#arr"/></svg></button>
  <i class="mx-[3px] h-[28px] w-[2px] shrink-0 border-r border-l border-r-white border-l-[#a4a4bc]"></i>
  <button aria-label="Diagnostics" class="w-7"><svg><use href="#i-o1"/></svg></button>
  <button aria-label="Dimensional visualization" class="w-7"><svg><use href="#i-o2"/></svg></button>
  <button aria-label="Geometrical visualization" class="w-7"><svg><use href="#i-geo"/></svg></button>
  <svg class="absolute right-[4px] bottom-0 h-[38px] w-[44px] overflow-visible" fill="none" role="img" aria-label="CATIA">
    <path d="M11 4c3-2 8-2 8 0s-4 4-7 5" stroke="#e02848" stroke-width="2"/>
    <path d="M9 11c10-2 9 9-6 11l7-10" stroke="#303890" stroke-width="2"/><path d="M26 11c-7-2-9 2-4 4s2 8-5 5" stroke="#f0a030" stroke-width="3"/>
    <text x="7" y="34" font-family="'Liberation Sans',sans-serif" font-size="10" font-weight="bold" font-style="italic" fill="#303070">CATIA</text>
  </svg>
</div>

<!-- status line -->
<footer class="flex h-[5px] shrink-0 justify-end pt-[2px]">
  <div class="w-[27%] border-t-2 border-l-2 border-[#5c5c6c] bg-white"></div>
</footer>
</body>
</html>
